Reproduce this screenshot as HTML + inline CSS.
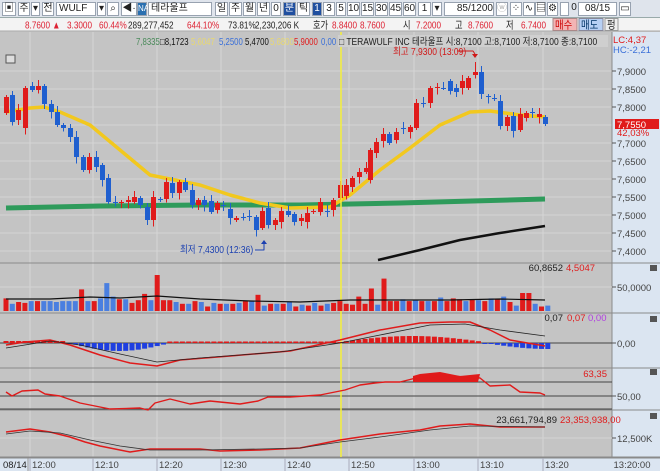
<!DOCTYPE html>
<html><head><meta charset="utf-8">
<style>
*{margin:0;padding:0;box-sizing:border-box}
body{width:660px;height:471px;overflow:hidden;background:#c6c6c6;font-family:"Liberation Sans","Noto Sans CJK KR",sans-serif;font-size:10px;position:relative}
.tb{position:absolute;left:0;top:0;width:660px;height:18px;background:#dfe4ec;border-bottom:1px solid #9aa}
.tb span{position:absolute;top:2px;height:14px;border:1px solid #98a2b0;background:#fff;font-size:10px;line-height:12px;text-align:center;color:#222}
svg{position:absolute;left:0;top:0}
</style></head><body>
<div class="tb">
<span style="left:2px;width:14px">▣</span>
<span style="left:18px;width:12px">주</span><span style="left:31px;width:9px">▾</span>
<span style="left:42px;width:12px">전</span>
<span style="left:56px;width:40px;text-align:left;padding-left:2px">WULF</span>
<span style="left:97px;width:9px">▾</span><span style="left:107px;width:12px">⌕</span>
<span style="left:121px;width:16px">◀·</span>
<span style="left:137px;width:10px;background:#2a6fb0;color:#fff;font-size:8px">NA</span>
<span style="left:148px;width:64px;text-align:left;padding-left:2px">테라울프</span>
<span style="left:215px;width:13px">일</span><span style="left:229px;width:13px">주</span><span style="left:243px;width:13px">월</span><span style="left:257px;width:13px">년</span><span style="left:271px;width:10px">0</span>
<span style="left:283px;width:13px;background:#1f4fa0;color:#fff">분</span><span style="left:297px;width:13px">틱</span>
<span style="left:312px;width:10px;background:#1f4fa0;color:#fff">1</span>
<span style="left:323px;width:12px">3</span><span style="left:336px;width:10px">5</span><span style="left:347px;width:13px">10</span><span style="left:361px;width:13px">15</span><span style="left:375px;width:13px">30</span><span style="left:389px;width:13px">45</span><span style="left:403px;width:13px">60</span><span style="left:418px;width:13px">1</span><span style="left:432px;width:10px">▾</span>
<span style="left:444px;width:50px;text-align:right">85/1200</span>
<span style="left:496px;width:12px;color:#aaa">ⓦ</span><span style="left:510px;width:12px">⁘</span><span style="left:523px;width:12px">∿</span><span style="left:535px;width:11px">▤</span><span style="left:547px;width:11px">⚙</span>
<span style="left:560px;width:9px"></span><span style="left:571px;width:6px;border:none;background:none">0</span>
<span style="left:578px;width:39px">08/15</span><span style="left:619px;width:12px">▭</span>
</div>
<svg id="c" width="660" height="471" font-family="Liberation Sans, Noto Sans CJK KR, sans-serif"></svg>
<script>
var s=document.getElementById('c'),h='';
function L(x1,y1,x2,y2,c,w){h+='<line x1="'+x1+'" y1="'+y1+'" x2="'+x2+'" y2="'+y2+'" stroke="'+c+'" stroke-width="'+(w||1)+'"/>';}
function R(x,y,w,hh,c){if(hh<0){y+=hh;hh=-hh;}h+='<rect x="'+x+'" y="'+y+'" width="'+w+'" height="'+Math.max(hh,1)+'" fill="'+c+'"/>';}
function P(pts,c,w){h+='<polyline fill="none" stroke="'+c+'" stroke-width="'+(w||1)+'" stroke-linejoin="round" points="'+pts+'"/>';}
function T(x,y,t,c,a,fs){h+='<text x="'+x+'" y="'+y+'" fill="'+c+'" font-size="'+(fs||10)+'"'+(a?' text-anchor="'+a+'"':'')+'>'+t+'</text>';}
function TL(x1,x2,y,t,c,fs,sc){h+='<text transform="translate('+x1+','+y+') scale('+(sc||0.78)+',1)" fill="'+c+'" font-size="'+(fs||10)+'">'+t+'</text>';}
R(0,18,660,13,'#f3f3f3');L(0,31,660,31,'#aaa');
var r=[[25,58,'8.7600 ▲','#d23'],[67,95,'3.3000','#d23'],[99,124,'60.44%','#d23'],[128,184,'289,277,452','#222'],[187,225,'644.10%','#d23'],[228,252,'73.81%','#222'],[255,310,'2,230,206 K','#222'],[313,329,'호가','#222'],[332,357,'8.8400','#d23'],[360,387,'8.7600','#d23'],[403,410,'시','#222'],[416,446,'7.2000','#d23'],[455,462,'고','#222'],[468,498,'8.7600','#d23'],[506,514,'저','#222'],[521,550,'6.7400','#d23']];
r.forEach(function(q){TL(q[0],q[1],28.5,q[2],q[3],10.5);});
h+='<rect x="553" y="18.5" width="24" height="12" fill="#f2b4b4" stroke="#a88"/><rect x="579" y="18.5" width="24" height="12" fill="#b7d0f4" stroke="#889"/><rect x="605" y="18.5" width="13" height="12" fill="#eee" stroke="#999"/>';
TL(555,575,28.5,'매수','#c00',11,0.85);TL(581,601,28.5,'매도','#036',11,0.85);TL(607,616,28.5,'펑','#222',11,0.85);
R(0,32,612,426,'#c4c4c4');R(612,32,48,426,'#dbe5f1');
for(var p=0;p<11;p++){var y=71+p*18;L(0,y,612,y,'#d4d4d4');}
[30,93,157,221,285,349,414,478,543].forEach(function(x){L(x,32,x,457,'#d6d6d6');});
[263,313,368,410,457].forEach(function(y){L(0,y,660,y,'#8a8a8a');});
L(612,32,612,457,'#8a8a8a');
L(0,287,612,287,'#d4d4d4');L(0,343,612,343,'#444');L(0,382,612,382,'#444');L(0,396,612,396,'#444');L(0,409,612,409,'#444');L(0,438,612,438,'#d4d4d4');
P('6,208 100,206 200,205 300,205 400,203 545,199','#2e9b5b',5);
P('378,260 420,250 460,240 500,233 545,226','#111',2.5);
P('6,112 30,108 44,107 60,112 90,125 120,150 150,175 175,180 200,185 230,195 260,203 290,208 330,207 350,195 380,170 410,148 440,125 470,112 490,111 505,113 520,115 545,117','#f2c81e',3.5);
var C=[[6,113,97],[12,95,122],[18,120,110],[25,128,88],[32,86,90],[38,90,86],[44,86,104],[51,104,112],[57,112,125],[63,125,128],[70,128,137],[76,137,157],[83,157,170],[89,170,157],[96,157,167],[102,165,180],[108,178,202],[115,202,203],[121,203,202],[128,202,200],[134,202,197],[140,198,205],[147,207,220],[153,220,197],[160,199,200],[166,199,182],[172,183,193],[179,193,182],[185,182,190],[192,190,205],[198,205,200],[204,200,205],[211,201,212],[217,210,203],[223,205,206],[230,209,218],[236,220,218],[243,217,217],[249,216,216],[256,217,230],[262,228,211],[268,208,225],[275,225,220],[281,222,211],[288,211,215],[294,214,222],[301,221,218],[307,222,213],[313,212,211],[320,212,202],[327,211,212],[333,210,200],[340,198,185],[346,196,185],[352,187,178],[359,177,172],[366,172,168],[370,180,150],[376,153,142],[383,141,134],[389,134,143],[396,140,132],[403,128,129],[410,132,127],[416,128,103],[423,103,104],[430,103,88],[437,88,87],[443,88,88],[450,81,91],[456,88,92],[462,88,81],[468,88,78],[475,75,72],[481,72,94],[488,96,97],[494,98,99],[500,101,126],[507,126,117],[513,116,131],[520,130,114],[526,118,113],[532,112,113],[539,117,114],[545,117,124]];
C.forEach(function(c,i){var up=c[2]<c[1],col=up?'#e01b1b':'#1f5fcf';var t=Math.min(c[1],c[2]),b=Math.max(c[1],c[2]);L(c[0]+0.5,t-2-(i%3)*2,c[0]+0.5,b+2+(i%4)*1.5,col,1);R(c[0]-2,t,5,b-t,col);});
L(475.5,62,475.5,72,'#e01b1b');
L(341,32,341,457,'#f5f03a',1.5);
var lg=[[136,157,'7,8335','#4a8a5a'],[160,190,'□8,1723','#111'],[191,217,'5,6047','#e8d870'],[219,242,'5,2500','#3a6fd8'],[245,268,'5,4700','#111'],[270,293,'5,6800','#e8d870'],[294,319,'5,9000','#e01b1b'],[321,334,'0,00','#3a6fd8']];
lg.forEach(function(q){TL(q[0],q[1],45,q[2],q[3],10);});
h+='<rect x="338" y="35" width="270" height="12" fill="#cfcfcf"/>';
TL(339,607,45,'□ TERAWULF INC  테라울프 시:8,7100 고:8,7100 저:8,7100 종:8,7100','#222',10,0.85);
TL(393,455,55,'최고 7,9300 (13:09)','#d01818',10,0.85);P('457,51 473,51 475,54','#d01818',1);h+='<polygon points="472,54 478,54 475,58" fill="#d01818"/>';
TL(180,252,253,'최저 7,4300 (12:36)','#1a3fb0',10,0.85);P('255,250 264,250 264,243','#1a3fb0',1);h+='<polygon points="261,244 267,244 264,240" fill="#1a3fb0"/>';
h+='<rect x="6" y="55" width="9" height="8" fill="#ddd" stroke="#555" stroke-width="1"/>';
var pl=['7,9000','7,8500','7,8000','7,7550','7,7000','7,6500','7,6000','7,5500','7,5000','7,4500','7,4000'];
for(var k=0;k<11;k++){var y=71+k*18;if(k!=3){L(612,y,616,y,'#555');T(617,y+4,pl[k],'#444','',9.5);}}
R(615,119,44,10,'#e01b1b');T(617,128,'7,7550','#fff','',9.5);T(617,136,'42,03%','#e01b1b','',9.5);
T(613,43,'LC:4,37','#e01b1b','',9.5);T(613,53,'HC:-2,21','#3a6fd8','',9.5);
var V=[14,8,10,9,11,11,11,11,10,11,11,11,24,11,11,14,31,16,13,13,9,12,19,12,40,12,12,10,8,8,11,10,5,9,8,8,8,9,11,11,18,6,8,8,8,10,5,7,6,9,6,8,9,11,8,7,16,8,25,7,36,11,11,13,11,12,11,11,11,15,11,14,13,11,13,12,11,14,13,16,10,6,20,20,8,5,6,8,7,7];
var bs=6.3;for(var i=0;i<87;i++){var x=6+i*bs;var up=[0,2,3,5,12,14,18,20,21,22,24,25,26,28,30,32,34,36,38,40,42,44,46,48,50,52,53,54,55,56,57,58,60,61,62,64,66,68,70,71,72,74,76,78,80,82,83,85].indexOf(i)>=0;R(x-2.5,311,5,-V[i%V.length]*0.9,up?'#e01b1b':'#4a7fe0');}
P('6,299 50,299 90,297 120,298 157,296 200,299 250,301 300,302 350,300 400,300 450,300 500,299 545,300','#111',1.2);
T(563,271,'60,8652','#222','end',9.5);T(566,271,'4,5047','#e01b1b','',9.5);
L(612,287,616,287,'#555');T(617,291,'50,0000','#444','',9.5);
for(var i=0;i<87;i++){var x=6+i*bs,v;if(i<10)v=-2;else if(i<26)v=Math.sin((i-10)/16*Math.PI)*8;else if(i<53)v=-1.5;else if(i<76)v=-Math.sin((i-53)/23*Math.PI)*6-1;else v=Math.sin(Math.min((i-76)/10,1)*Math.PI*0.5)*6;
R(x-2.5,343,5,v,v<0?'#e01b1b':'#1f3fe0');}
P('6,345 25,342 50,340 70,345 100,355 130,363 157,366 180,360 230,356 290,351 340,340 380,330 420,323 450,322 470,322 490,330 510,340 545,346','#e01b1b',1.5);
P('6,348 50,341 80,345 120,354 157,362 200,358 280,352 340,343 380,335 430,325 465,324 500,330 545,336','#222',0.8);
T(563,321,'0,07','#222','end',9.5);T(567,321,'0,07','#e01b1b','',9.5);T(588,321,'0,00','#b040e0','',9.5);
L(612,343,616,343,'#555');T(617,347,'0,00','#444','',9.5);
h+='<polygon points="413,376 420,374 440,372 460,376 480,374 478,382 413,382" fill="#e01b1b"/>';
P('6,392 12,396 22,391 38,390 45,394 60,396 80,403 90,405 110,409 140,408 148,410 155,403 170,399 190,404 210,401 240,404 258,401 268,397 290,397 320,395 345,390 360,385 375,383 385,382 400,382 420,377 440,376 470,377 480,378 490,386 510,385 520,392 540,393 545,395','#e01b1b',1.4);
T(607,377,'63,35','#e01b1b','end',9.5);L(612,396,616,396,'#555');T(617,400,'50,00','#444','',9.5);
P('6,432 30,429 50,432 70,437 85,442 100,446 115,449 130,452 150,449 200,449 220,451 260,450 300,448 340,440 380,434 420,430 440,426 470,424 500,427 545,427','#e01b1b',1.5);
P('6,434 30,431 60,433 90,440 120,446 150,450 200,450 260,449 300,448 340,442 380,437 430,430 470,426 545,427','#333',0.8);
T(557,423,'23,661,794,89','#222','end',9.5);T(560,423,'23,353,938,00','#e01b1b','',9.5);
L(612,438,616,438,'#555');T(617,442,'12,500K','#444','',9.5);
[[654,268],[654,319],[654,372],[654,416]].forEach(function(q){R(q[0]-4,q[1]-3,7,6,'#555');});
R(0,458,660,13,'#dbe5f1');L(0,458,660,458,'#8a8a8a');
T(3,468,'08/14','#222','',9.5);L(28,458,28,471,'#999');
[['12:00',30],['12:10',93],['12:20',157],['12:30',221],['12:40',285],['12:50',349],['13:00',414],['13:10',478],['13:20',543]].forEach(function(t){L(t[1],458,t[1],471,'#aab');T(t[1]+2,468,t[0],'#444','',9.5);});
T(632,468,'13:20:00','#444','middle',9.5);
s.innerHTML=h;
</script>
</body></html>
